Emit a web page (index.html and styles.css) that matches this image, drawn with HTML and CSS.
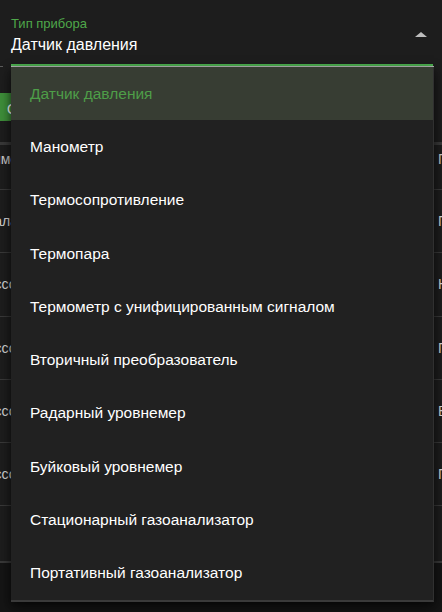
FILE: index.html
```html
<!DOCTYPE html>
<html lang="ru">
<head>
<meta charset="utf-8">
<title>Тип прибора</title>
<link rel="stylesheet" href="styles.css">
</head>
<body>
<div class="page">
  <div class="topbar">
    <div class="prev-field"></div>
    <div class="field">
      <div class="field-inner">
        <div class="field-text">
          <div class="field-label">Тип прибора</div>
          <div class="field-value">Датчик давления</div>
        </div>
        <span class="arrow"></span>
      </div>
    </div>
  </div>

  <div class="toolbar"><button class="btn">Сохранить</button></div>

  <div class="table">
    <div class="row head"><div class="c1">Наименование</div><div class="c2">Группа</div></div>
    <div class="row"><div class="c1">Шкала прибора</div><div class="c2">Газ</div></div>
    <div class="row"><div class="c1">Массовый расходомер</div><div class="c2">Нефть</div></div>
    <div class="row"><div class="c1">Массовый расходомер</div><div class="c2">Газ</div></div>
    <div class="row"><div class="c1">Массовый расходомер</div><div class="c2">Вода</div></div>
    <div class="row"><div class="c1">Массовый расходомер</div><div class="c2">Газ</div></div>
    <div class="row last"></div>
  </div>
  <div class="table-foot"></div>

  <ul class="menu">
    <li class="item selected">Датчик давления</li>
    <li class="item">Манометр</li>
    <li class="item">Термосопротивление</li>
    <li class="item">Термопара</li>
    <li class="item">Термометр с унифицированным сигналом</li>
    <li class="item">Вторичный преобразователь</li>
    <li class="item">Радарный уровнемер</li>
    <li class="item">Буйковый уровнемер</li>
    <li class="item">Стационарный газоанализатор</li>
    <li class="item">Портативный газоанализатор</li>
  </ul>
</div>
</body>
</html>
```

FILE: styles.css
```css
html, body {
  margin: 0;
  height: 100%;
  overflow: hidden;
}
body {
  background: #1d1d1d;
  color: #ffffff;
  font-family: "Liberation Sans", Arial, sans-serif;
}
.page {
  position: relative;
  height: 612px;
  display: flex;
  flex-direction: column;
}

/* select field */
.topbar {
  display: flex;
  align-items: flex-end;
  gap: 8px;
}
.prev-field {
  width: 3px;
  border-bottom: 1px solid #5c5c5c;
}
.field {
  width: 423px;
  border-bottom: 1px solid #b8b8b8;
}
.field-inner {
  width: 422px;
  height: 64px;
  border-bottom: 2px solid #4caf50;
  display: flex;
  justify-content: space-between;
}
.field-text {
  padding-top: 16px;
}
.field-label {
  font-size: 13px;
  line-height: 15px;
  color: #4fa84a;
}
.field-value {
  margin-top: 4px;
  font-size: 16px;
  line-height: 19px;
  color: #ffffff;
}
.arrow {
  margin-top: 32px;
  margin-right: 6px;
  width: 0;
  height: 0;
  border-left: 6.5px solid transparent;
  border-right: 6.5px solid transparent;
  border-bottom: 5px solid #bdbdbd;
}

/* toolbar */
.toolbar {
  margin-top: 26px;
  height: 28px;
}
.btn {
  height: 28px;
  border: none;
  border-radius: 0;
  background: #3e8e3a;
  color: #ffffff;
  font-family: "Liberation Sans", Arial, sans-serif;
  font-size: 14px;
  line-height: 24px;
  padding: 4px 12px 0 7px;
  margin: 0;
}

/* background table */
.table {
  margin-top: 21px;
  margin-left: -25px;
  border-top: 3px solid #393939;
}
.row {
  display: grid;
  grid-template-columns: 463px 1fr;
  height: 62.25px;
  border-bottom: 1px solid #393939;
  align-items: center;
  font-size: 14px;
  line-height: 16px;
  color: #d4d4d4;
  white-space: nowrap;
}
.row.head {
  height: 44px;
  align-items: start;
  color: #c9c9c9;
}
.row.head .c1,
.row.head .c2 {
  padding-top: 6px;
}
.row.last {
  height: 54.75px;
  border-bottom: none;
}
.c1, .c2 {
  overflow: hidden;
}
.table-foot {
  flex: 1;
  border-top: 2px solid #393939;
  background: #151515;
}

/* dropdown menu */
.menu {
  position: absolute;
  top: 67px;
  left: 11px;
  width: 422px;
  margin: 0;
  padding: 0;
  list-style: none;
  background: #212121;
  border-right: 1px solid #303030;
  border-bottom: 2px solid #3a3a3a;
  box-shadow: 0 6px 12px rgba(0, 0, 0, 0.55), 0 2px 6px rgba(0, 0, 0, 0.3);
}
.item {
  height: 53.3px;
  display: flex;
  align-items: center;
  padding-left: 19px;
  font-size: 15.5px;
  color: #ffffff;
}
.item.selected {
  background: #373d33;
  color: #4e9e48;
}
```
